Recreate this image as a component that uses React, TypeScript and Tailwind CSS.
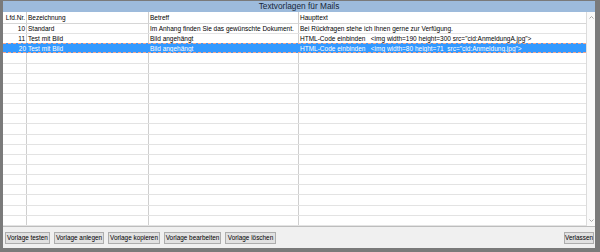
import React from 'react';

const rows = [
  { nr: '10', name: 'Standard', betreff: 'Im Anhang finden Sie das gewünschte Dokument.', text: 'Bei Rückfragen stehe ich Ihnen gerne zur Verfügung.' },
  { nr: '11', name: 'Test mit Bild', betreff: 'Bild angehängt', text: 'HTML-Code einbinden   <img width=190 height=300 src="cid:AnmeldungA.jpg">' },
  { nr: '20', name: 'Test mit Bild', betreff: 'Bild angehängt', text: 'HTML-Code einbinden   <img width=80 height=71  src="cid:Anmeldung.jpg">', selected: true },
];

const emptyRows = Array.from({ length: 17 });

const buttons = [
  { label: 'Vorlage testen', w: 'w-[45px]' },
  { label: 'Vorlage anlegen', w: 'w-[50px]' },
  { label: 'Vorlage kopieren', w: 'w-[52px]' },
  { label: 'Vorlage bearbeiten', w: 'w-[57px]' },
  { label: 'Vorlage löschen', w: 'w-[51px]' },
];

function Row({ r }: { r?: (typeof rows)[number] }) {
  const sel = r?.selected;
  return (
    <div
      className={`flex h-[10.15px] leading-[9px] border-b border-[#e3e3e3] ${
        sel ? 'bg-[#3399ff] text-white border-dashed border-t border-[#f3a48c] -mt-px' : 'text-black'
      }`}
    >
      <div className={`w-[24px] shrink-0 text-right pr-[1px] ${sel ? '' : 'border-r border-[#cfcfcf]'}`}>{r?.nr}</div>
      <div className={`w-[122px] shrink-0 pl-[1px] whitespace-pre overflow-hidden ${sel ? '' : 'border-r border-[#cfcfcf]'}`}>{r?.name}</div>
      <div className={`w-[150px] shrink-0 pl-[1px] whitespace-pre overflow-hidden ${sel ? '' : 'border-r border-[#cfcfcf]'}`}>{r?.betreff}</div>
      <div className="flex-1 pl-[1px] whitespace-pre overflow-hidden">{r?.text}</div>
    </div>
  );
}

export default function App() {
  return (
    <div
      className="w-[600px] h-[252px] bg-[#7a7a7a] pl-[3px] pr-[5px] pb-[4px] pt-[1px] flex flex-col text-[6.5px]"
      style={{ fontFamily: '"Liberation Sans", Arial, sans-serif' }}
    >
      {/* Titel */}
      <div className="h-[11px] shrink-0 bg-[#9dbbdc] text-[#17263a] text-[8.3px] leading-[11px] text-center">
        Textvorlagen für Mails
      </div>

      {/* Tabelle */}
      <div className="h-[215px] shrink-0 flex bg-white border-b border-[#bdbdbd]">
        <div className="flex-1 flex flex-col">
          <div className="flex h-[12px] leading-[12px] border-b border-[#d6d6d6] text-black">
            <div className="w-[24px] shrink-0 text-right pr-[1px] border-r border-[#cfcfcf]">Lfd.Nr.</div>
            <div className="w-[122px] shrink-0 pl-[1px] border-r border-[#cfcfcf]">Bezeichnung</div>
            <div className="w-[150px] shrink-0 pl-[1px] border-r border-[#cfcfcf]">Betreff</div>
            <div className="flex-1 pl-[1px]">Haupttext</div>
          </div>
          {rows.map((r) => (
            <Row key={r.nr} r={r} />
          ))}
          {emptyRows.map((_, i) => (
            <Row key={i} />
          ))}
        </div>
        {/* Scrollbar */}
        <div className="w-[9px] shrink-0 border-l border-[#dcdcdc] bg-[#fafafa] flex flex-col justify-between items-center py-[4px]">
          <svg width="5" height="3" viewBox="0 0 5 3"><path d="M0.5 2.5 L2.5 0.5 L4.5 2.5" fill="none" stroke="#a8a8a8" strokeWidth="1" /></svg>
          <svg width="5" height="3" viewBox="0 0 5 3"><path d="M0.5 0.5 L2.5 2.5 L4.5 0.5" fill="none" stroke="#a8a8a8" strokeWidth="1" /></svg>
        </div>
      </div>

      {/* Buttons */}
      <div className="flex-1 bg-[#f0f0f0] flex items-center pl-[2px] pr-[1px] pt-[1px]">
        <div className="flex gap-[4px]">
          {buttons.map((b) => (
            <div
              key={b.label}
              className={`${b.w} h-[12px] leading-[10px] text-center whitespace-nowrap bg-[#e1e1e1] border border-[#adadad] text-black text-[6.4px]`}
            >
              {b.label}
            </div>
          ))}
        </div>
        <div className="ml-auto w-[30px] h-[12px] leading-[10px] text-center bg-[#e1e1e1] border border-[#adadad] text-black text-[6.4px]">
          Verlassen
        </div>
      </div>
    </div>
  );
}
